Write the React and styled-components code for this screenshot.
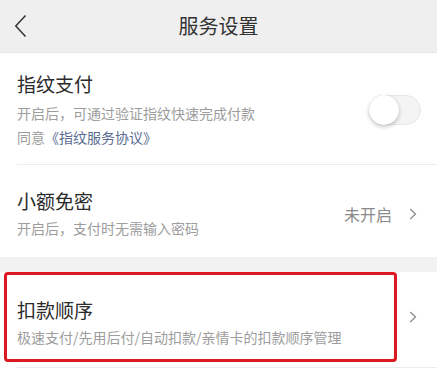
import React from 'react';
import styled, { createGlobalStyle } from 'styled-components';

const GlobalStyle = createGlobalStyle`
  html, body {
    margin: 0;
    padding: 0;
    background: #ffffff;
  }
  body {
    font-family: "Noto Sans CJK SC", "Noto Sans", sans-serif;
    color: #333;
  }
`;

const Page = styled.div`
  width: 437px;
  height: 380px;
  overflow: hidden;
  background: #f2f2f2;
  display: flex;
  flex-direction: column;
`;

const Header = styled.header`
  height: 52px;
  flex-shrink: 0;
  background: #efefef;
  border-bottom: 1px solid #e6e6e6;
  display: grid;
  grid-template-columns: 60px 1fr 60px;
  align-items: center;
`;

const BackButton = styled.div`
  display: flex;
  align-items: center;
  padding-left: 14px;
  height: 100%;
`;

const Title = styled.h1`
  margin: 0;
  text-align: center;
  font-size: 20px;
  font-weight: 400;
  color: #333;
  line-height: 28px;
`;

const Section = styled.section`
  background: #fff;
  margin-top: ${({ $gap }) => $gap || 0}px;
  padding-bottom: ${({ $pb }) => $pb || 0}px;
`;

const Row = styled.div`
  display: flex;
  align-items: center;
  padding: ${({ $pad }) => $pad};
`;

const Info = styled.div`
  flex: 1;
  display: flex;
  flex-direction: column;
`;

const ItemTitle = styled.div`
  font-size: 19px;
  line-height: 26px;
  color: #2b2b2b;
`;

const ItemDesc = styled.div`
  font-size: 14px;
  line-height: 22px;
  color: #9d9d9d;
  margin-top: ${({ $mt }) => $mt ?? 0}px;
  white-space: nowrap;
`;

const Link = styled.span`
  color: #5a6c92;
`;

const Divider = styled.div`
  height: 1px;
  background: #ececec;
  margin-left: 17px;
  margin-top: ${({ $mt }) => $mt || 0}px;
`;

const Toggle = styled.div`
  width: 52px;
  height: 30px;
  border-radius: 15px;
  background: #f4f4f4;
  border: 1px solid #e6e6e6;
  box-sizing: border-box;
  position: relative;
  flex-shrink: 0;
`;

const Knob = styled.div`
  position: absolute;
  left: -1px;
  top: -1px;
  width: 30px;
  height: 30px;
  border-radius: 50%;
  background: #fff;
  box-shadow: 0 2px 4px rgba(0, 0, 0, 0.22), 0 0 1px rgba(0, 0, 0, 0.15);
`;

const Value = styled.span`
  font-size: 16px;
  color: #8a8a8a;
  margin-right: 17px;
  line-height: 22px;
`;

const Chevron = styled.span`
  display: flex;
  align-items: center;
  margin-left: ${({ $ml }) => $ml || 0}px;
`;

const Highlight = styled.div`
  flex: 1;
  border: 3px solid #dd1820;
  border-radius: 4px;
  padding: 22px 0 11px 10px;
  display: flex;
  flex-direction: column;
`;

const Arrow = () => (
  <svg width="8" height="12" viewBox="0 0 8 12">
    <path d="M1.2 1 L6.5 6 L1.2 11" fill="none" stroke="#8c8c8c" strokeWidth="1.3" />
  </svg>
);

const Back = () => (
  <svg width="13" height="24" viewBox="0 0 13 24">
    <path d="M11.5 1.5 L1.8 12 L11.5 22.5" fill="none" stroke="#333" strokeWidth="1.5" />
  </svg>
);

export default function App() {
  return (
    <>
      <GlobalStyle />
      <Page>
        <Header>
          <BackButton>
            <Back />
          </BackButton>
          <Title>服务设置</Title>
          <div />
        </Header>

        <Section>
          <Row $pad="18px 16px 16px 17px">
            <Info>
              <ItemTitle>指纹支付</ItemTitle>
              <ItemDesc $mt={5}>开启后，可通过验证指纹快速完成付款</ItemDesc>
              <ItemDesc $mt={2}>
                同意<Link>《指纹服务协议》</Link>
              </ItemDesc>
            </Info>
            <Toggle>
              <Knob />
            </Toggle>
          </Row>
          <Divider />
          <Row $pad="23px 20px 18px 17px">
            <Info>
              <ItemTitle>小额免密</ItemTitle>
              <ItemDesc $mt={3}>开启后，支付时无需输入密码</ItemDesc>
            </Info>
            <Value>未开启</Value>
            <Chevron>
              <Arrow />
            </Chevron>
          </Row>
        </Section>

        <Section $gap={15} $pb={30}>
          <Row $pad="0 20px 0 4px">
            <Highlight>
              <ItemTitle>扣款顺序</ItemTitle>
              <ItemDesc $mt={3}>极速支付/先用后付/自动扣款/亲情卡的扣款顺序管理</ItemDesc>
            </Highlight>
            <Chevron $ml={12}>
              <Arrow />
            </Chevron>
          </Row>
          <Divider $mt={5} />
        </Section>
      </Page>
    </>
  );
}
